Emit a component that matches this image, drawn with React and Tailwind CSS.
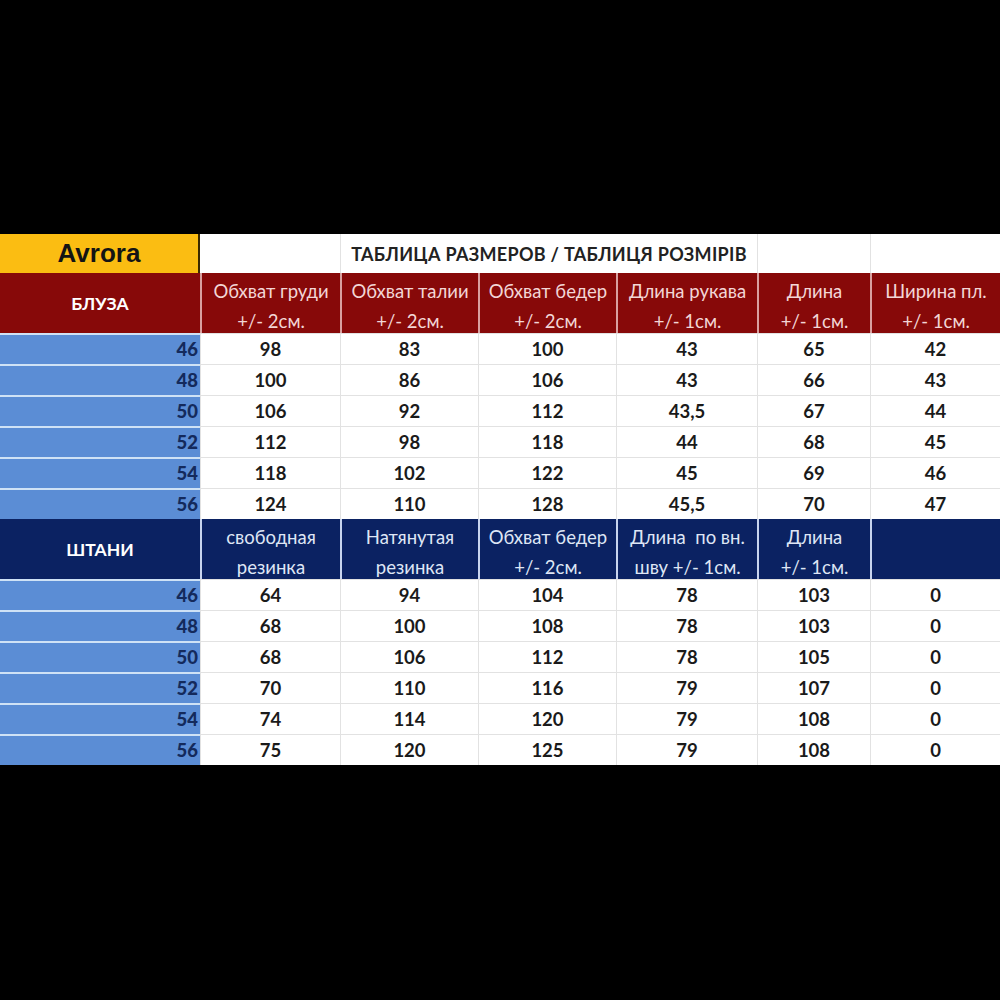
import React from "react";

const blouse = [
  ["46", "98", "83", "100", "43", "65", "42"],
  ["48", "100", "86", "106", "43", "66", "43"],
  ["50", "106", "92", "112", "43,5", "67", "44"],
  ["52", "112", "98", "118", "44", "68", "45"],
  ["54", "118", "102", "122", "45", "69", "46"],
  ["56", "124", "110", "128", "45,5", "70", "47"],
];
const pants = [
  ["46", "64", "94", "104", "78", "103", "0"],
  ["48", "68", "100", "108", "78", "103", "0"],
  ["50", "68", "106", "112", "78", "105", "0"],
  ["52", "70", "110", "116", "79", "107", "0"],
  ["54", "74", "114", "120", "79", "108", "0"],
  ["56", "75", "120", "125", "79", "108", "0"],
];

const blouseHead = [
  ["Обхват груди", "+/- 2см."],
  ["Обхват талии", "+/- 2см."],
  ["Обхват бедер", "+/- 2см."],
  ["Длина рукава", "+/- 1см."],
  ["Длина", "+/- 1см."],
  ["Ширина пл.", "+/- 1см."],
];
const pantsHead = [
  ["свободная", "резинка"],
  ["Натянутая", "резинка"],
  ["Обхват бедер", "+/- 2см."],
  ["Длина  по вн.", "шву +/- 1см."],
  ["Длина", "+/- 1см."],
  null,
];

function DataRows({ rows }) {
  return rows.map((r, i) => (
    <React.Fragment key={i}>
      <div className="h-[31px] bg-[#5b8dd5] border-t-2 border-[#cfe2f6] flex items-center justify-end pr-[2px] pt-[1px] text-[18.5px] font-black text-[#142a5c]">
        {r[0]}
      </div>
      {r.slice(1).map((v, j) => (
        <div
          key={j}
          className="h-[31px] bg-white border-l border-t border-[#e2e2e2] flex items-center justify-center pt-[1px] text-[18.5px] font-bold text-[#1a1a1a]"
        >
          {v}
        </div>
      ))}
    </React.Fragment>
  ));
}

function HeadRow({ label, cells, bg, text, border }) {
  return (
    <>
      <div className={`h-[60px] ${bg} flex items-center justify-center pt-[3px] text-[17.5px] font-bold text-white`}>
        {label}
      </div>
      {cells.map((c, j) => (
        <div
          key={j}
          className={`h-[60px] ${bg} border-l-2 ${border} flex flex-col items-center justify-center pt-[5px] text-[18.5px] leading-[30px] ${text}`}
        >
          {c && (
            <>
              <span className="whitespace-pre">{c[0]}</span>
              <span className="whitespace-pre">{c[1]}</span>
            </>
          )}
        </div>
      ))}
    </>
  );
}

export default function App() {
  return (
    <div
      className="w-[1000px] h-[1000px] bg-black pt-[234px]"
      style={{ fontFamily: "Lato, 'Open Sans', sans-serif" }}
    >
      <div className="grid grid-cols-[200px_140px_138px_138px_141px_113px_130px]">
        <div
          className="h-[39px] bg-[#fbbd12] border-r-2 border-[#3a2a00] flex items-center justify-center text-[26px] font-bold text-[#141414]"
          style={{ fontFamily: "'Liberation Sans', Arial, sans-serif" }}
        >
          Avrora
        </div>
        <div className="h-[39px] bg-white"></div>
        <div className="col-span-3 h-[39px] bg-white border-l border-[#e2e2e2] flex items-center justify-center pt-[2px] text-[18px] font-bold text-[#222] tracking-[0.3px]">
          ТАБЛИЦА РАЗМЕРОВ / ТАБЛИЦЯ РОЗМІРІВ
        </div>
        <div className="h-[39px] bg-white border-l border-[#e2e2e2]"></div>
        <div className="h-[39px] bg-white border-l border-[#e2e2e2]"></div>

        <HeadRow
          label="БЛУЗА"
          cells={blouseHead}
          bg="bg-[#870909]"
          text="text-[#f3d6d6]"
          border="border-[#d9a0a0]"
        />
        <DataRows rows={blouse} />

        <HeadRow
          label="ШТАНИ"
          cells={pantsHead}
          bg="bg-[#0b2262]"
          text="text-[#dfe6f5]"
          border="border-[#c8d4ee]"
        />
        <DataRows rows={pants} />
      </div>
    </div>
  );
}
